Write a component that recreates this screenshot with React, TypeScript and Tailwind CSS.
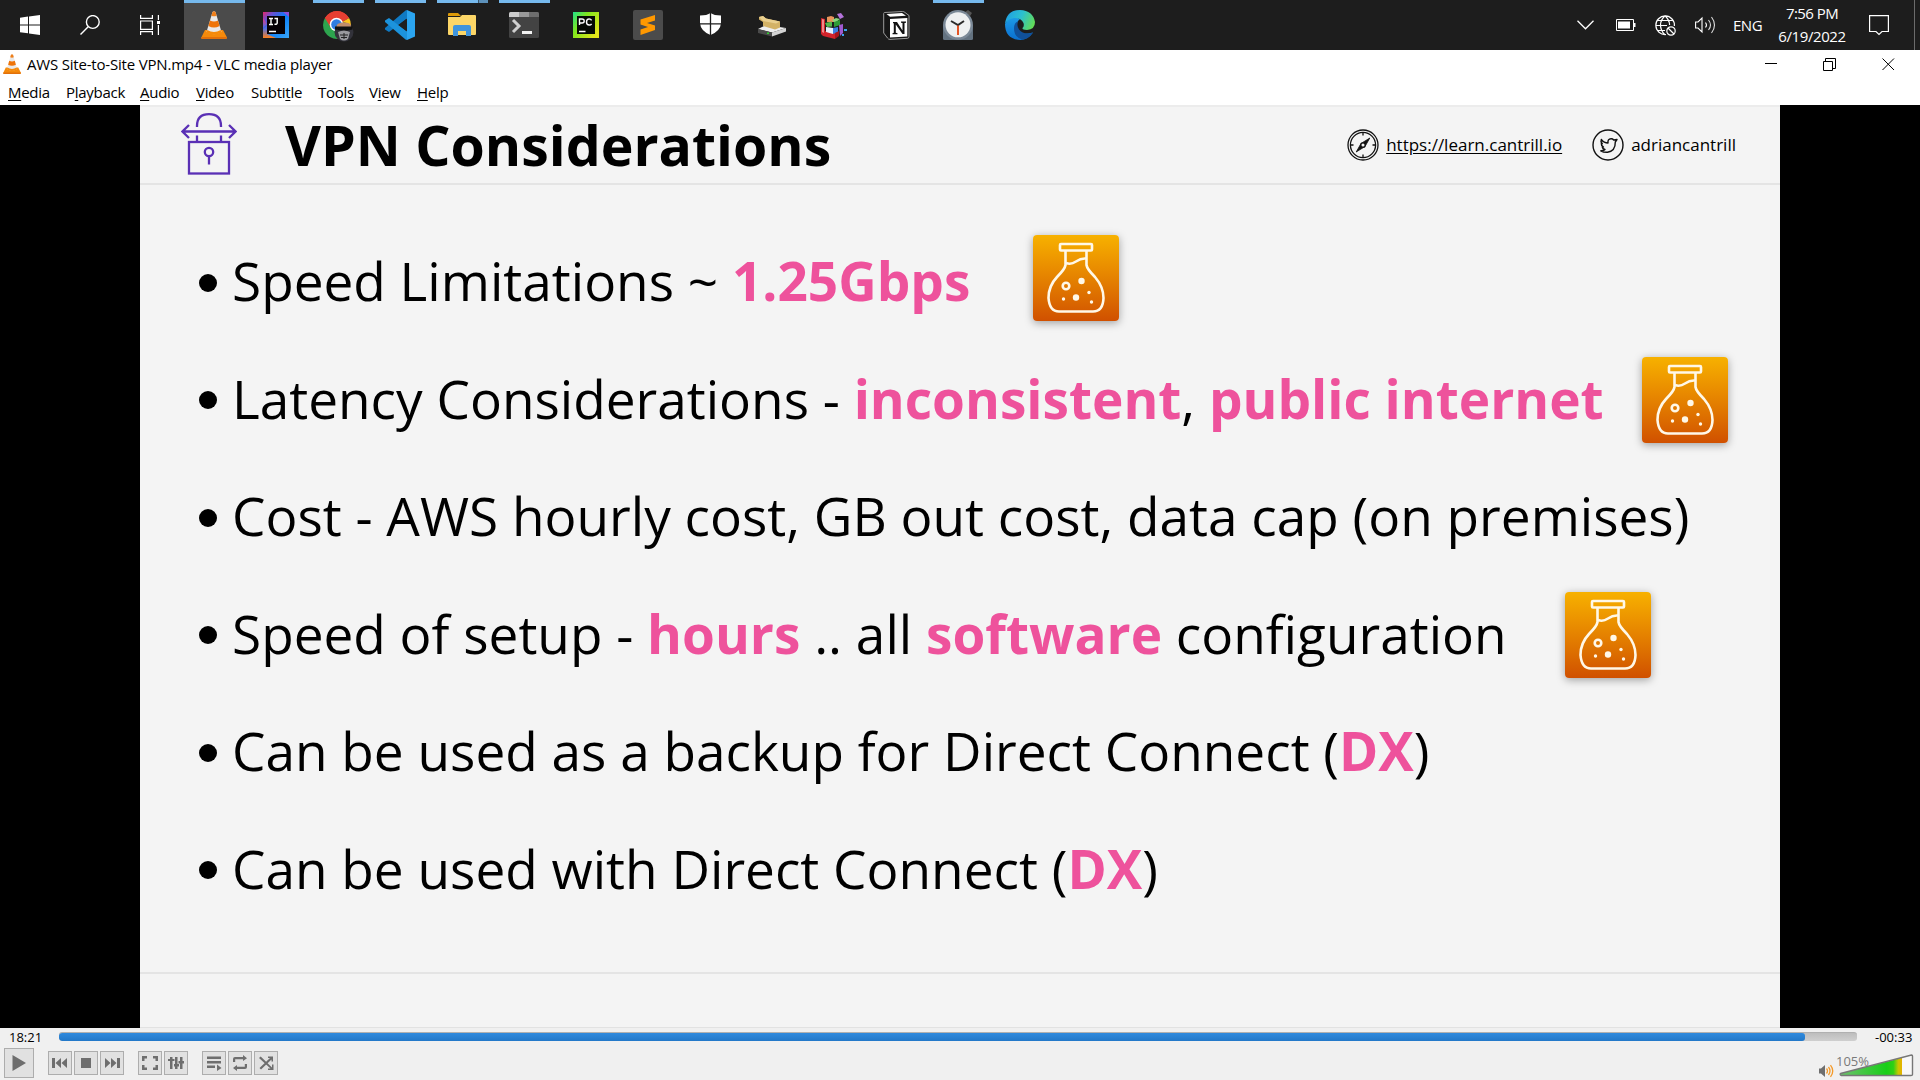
import { type ReactNode } from "react";

const SEGOE = "font-['Open_Sans','Noto_Sans',sans-serif]";

function VlcCone({ className }: { className: string }) {
  return (
    <svg viewBox="0 0 26 28" className={className} preserveAspectRatio="none">
      <path d="M4 19 L22 19 L26 26.5 Q26 28 24.5 28 L1.500 28 Q0 28 .3 26.500Z" fill="#f58a0b" />
      <path d="M.3 26 L25.800 26 Q26 28 24.500 28 L1.500 28 Q0 28 .3 26Z" fill="#e2700a" />
      <path d="M11.500 1 Q13 -.5 14.500 1 L20.500 21 Q13 25.500 5.500 21Z" fill="#e9e9e9" />
      <path d="M11.500 1 Q13 -.5 14.500 1 L15.600 4.700 Q13 6 10.400 4.700Z" fill="#ef7f1a" />
      <path d="M9 9.500 Q13 11.500 17 9.500 L18.600 15 Q13 18 7.400 15Z" fill="#ef7408" />
      <path d="M6.300 19 Q13 23 19.700 19 L20.500 21.500 Q13 26 5.500 21.500Z" fill="#f58a0b" />
    </svg>
  );
}

const WindowsIcon = () => (
  <svg width="20" height="20" viewBox="0 0 20 20" fill="#fff">
    <path d="M0 2.800 8 1.600V9.500H0zM9 1.400 20 0V9.500H9zM0 10.500H8V18.300L0 17.200zM9 10.500H20V20L9 18.500z" />
  </svg>
);

const SearchIcon = () => (
  <svg width="20" height="20" viewBox="0 0 20 20" fill="none" stroke="#fff" strokeWidth="1.4">
    <circle cx="12.800" cy="7" r="6.400" />
    <path d="M8.200 11.700 0.500 19.500" />
  </svg>
);

const TaskViewIcon = () => (
  <svg width="20" height="20" viewBox="0 0 20 20" fill="none" stroke="#fff" strokeWidth="1.200">
    <path d="M.6 0V3.400H12.400V0M.6 20V16.600H12.400V20M.6 6V14.400H12.400V6zM18.400 0V5M18.400 10V20" />
    <rect x="17" y="6" width="3" height="3" fill="#fff" stroke="none" />
  </svg>
);

const IntellijIcon = () => (
  <svg width="26" height="26" viewBox="0 0 26 26">
    <defs>
      <linearGradient id="ij" x1="0" y1="0" x2="1" y2="1">
        <stop offset="0" stopColor="#e8256b" />
        <stop offset=".2" stopColor="#6a4fd0" />
        <stop offset=".5" stopColor="#087cfa" />
        <stop offset="1" stopColor="#3aa5f5" />
      </linearGradient>
      <linearGradient id="ij2" x1="0" y1="0" x2="0" y2="1">
        <stop offset="0" stopColor="#f0357b" />
        <stop offset=".5" stopColor="#4b6fe8" />
        <stop offset="1" stopColor="#fc801d" />
      </linearGradient>
    </defs>
    <rect width="26" height="26" fill="url(#ij)" />
    <path d="M0 6 4 12 0 16zM0 17 4 14V22L13 26H0z" fill="url(#ij2)" />
    <path d="M20 0H26V5z" fill="#8a4fd8" />
    <rect x="4" y="4" width="18" height="18" fill="#050005" />
    <path d="M6 6.500H10M6 12.500H10M8 6.500V12.500M11.500 6.500H15M14.200 6.500V11Q14.200 12.600 11.500 12.200M6 19.500H13" fill="none" stroke="#fff" strokeWidth="1.400" />
  </svg>
);

const ChromeIcon = () => (
  <svg width="31" height="31" viewBox="0 0 31 31">
    <path d="M14 14 L1.900 7 A14 14 0 0 1 26.100 7z" fill="#e53f32" />
    <path d="M14 14 V28 A14 14 0 0 1 1.900 7z" fill="#2da44e" />
    <path d="M14 14 L26.100 7 A14 14 0 0 1 14 28z" fill="#fcc31e" />
    <path d="M14 7H26.100A14 14 0 0 0 1.900 7L8 17z" fill="#e53f32" />
    <circle cx="13.500" cy="13.500" r="6.800" fill="#fff" />
    <circle cx="13.500" cy="13.500" r="5.300" fill="#2f7de1" />
    <circle cx="21" cy="21" r="9.500" fill="#32323a" />
    <path d="M13.500 15Q14 11.500 21 11.500T28 15L27 19H14.500z" fill="#c08d6c" />
    <path d="M12 15.500H29.500V18.500L22 20 12 18.500z" fill="#111" />
    <path d="M15 21Q21 18 27 21L25 28Q21 31 17 28z" fill="#9a9a9e" />
    <path d="M17 24H25M18 26.500H24M21 22V28" stroke="#222" strokeWidth="1" />
  </svg>
);

const VsCodeIcon = () => (
  <svg width="30" height="30" viewBox="0 0 30 30">
    <path d="M22 0 30 3.500V26.500L22 30 21 22V8z" fill="#2ba5f0" />
    <path d="M22 0V8.500L4 22 0 19.500V18L20.500 .6z" fill="#0f7ac4" />
    <path d="M22 30V21.500L4 8 0 10.500V12L20.500 29.400z" fill="#1c93dc" />
    <path d="M22 8.500V21.500L13.500 15z" fill="#1e1e1e" />
  </svg>
);

const ExplorerIcon = () => (
  <svg width="28" height="24" viewBox="0 0 28 24">
    <path d="M0 1Q0 0 1 0H10L13 3H0z" fill="#dd9a07" />
    <path d="M0 4H12L14 2H27Q28 2 28 3V21Q28 22 27 22H1Q0 22 0 21z" fill="#fcd667" />
    <path d="M5 23V14Q5 12 7 12H21Q23 12 23 14V23H18V18H10V23z" fill="#3f94dc" />
  </svg>
);

const TerminalIcon = () => (
  <svg width="30" height="26" viewBox="0 0 30 26">
    <rect width="30" height="26" rx="1.500" fill="#434343" />
    <path d="M0 5V1.500Q0 0 1.500 0H10V5z" fill="#ccc" />
    <path d="M10 0H20V5H10z" fill="#999" />
    <path d="M20 0H28.500Q30 0 30 1.500V5H20z" fill="#6e6e6e" />
    <path d="M4 8 10 14 4 20" fill="none" stroke="#cfcfcf" strokeWidth="3" />
    <rect x="13" y="19" width="10" height="3" fill="#f2f2f2" />
  </svg>
);

const PycharmIcon = () => (
  <svg width="26" height="26" viewBox="0 0 26 26">
    <defs>
      <linearGradient id="pc" x1="0" y1="0" x2="1" y2=".7">
        <stop offset="0" stopColor="#21e08a" />
        <stop offset=".4" stopColor="#7fe61e" />
        <stop offset="1" stopColor="#e4e61a" />
      </linearGradient>
    </defs>
    <rect width="26" height="26" fill="url(#pc)" />
    <rect x="4" y="4" width="18" height="18" fill="#060b04" />
    <path d="M6.500 13V7H9Q11.200 7 11.200 9 11.200 11 9 11H6.500M18.600 8.300Q17.800 6.900 16.200 6.900 13.500 7 13.500 10 13.500 13 16.200 13 17.800 13 18.600 11.800M6 19.500H12.500" fill="none" stroke="#fff" strokeWidth="1.400" />
  </svg>
);

const SublimeIcon = () => (
  <svg width="30" height="30" viewBox="0 0 30 30">
    <rect width="30" height="30" rx="2" fill="#4b4b4b" />
    <path d="M22 5V10.500L14 13 22 15.500V20L7.500 25V19.500L15 17 7.500 14.500V9.500z" fill="#ff9800" />
  </svg>
);

const ShieldIcon = () => (
  <svg width="21" height="22" viewBox="0 0 21 22">
    <path d="M10.500 0Q14 2.500 21 2.500V10Q20.500 18 10.500 22 .5 18 0 10V2.500Q7 2.500 10.500 0z" fill="#fff" />
    <path d="M10.500 0V22M0 10.800H21" stroke="#1d1d1d" strokeWidth="1.300" />
  </svg>
);

const DriveIcon = () => (
  <svg width="28" height="21" viewBox="0 0 28 21">
    <path d="M0 13 8 9 28 12 14 16.500z" fill="#eee" />
    <path d="M0 13 14 16.500V20.500L0 17z" fill="#4a4a4a" />
    <path d="M14 16.500 28 12V15.500L14 20.500z" fill="#d4d4d4" />
    <path d="M1 1 5 0 8 2.500 22 5.500V11.500L17 13.500 5 10V6L1 3.500z" fill="#d3b266" />
    <path d="M1 1 5 0 8 2.500 22 5.500 18 7.500 5 5z" fill="#e9cf8f" />
    <rect x="9" y="16.500" width="2" height="1.500" fill="#2fd02f" />
  </svg>
);

const DefragIcon = () => (
  <svg width="27" height="26" viewBox="0 0 27 26">
    <path d="M0 5 4 6V18L14 20V26L2 23 0 21z" fill="#d2232b" />
    <path d="M1 6 3 6.500V20L1 19z" fill="#f08a8a" />
    <path d="M6 4 10 3 13 4V9L6 9z" fill="#e9955a" />
    <path d="M4 10 11 8.500V13.500L6 14z" fill="#54b64a" />
    <path d="M11 7 15 5 19 6 14 10z" fill="#8ad67d" />
    <path d="M13 9 19 7V12L13 14z" fill="#2f9c37" />
    <path d="M5 14 12 15V21L5 19z" fill="#e8f0fb" />
    <path d="M12 15 17 14V19L12 21z" fill="#3b7fe0" />
    <path d="M14 20 18 18V23L14 26z" fill="#a8141c" />
    <path d="M18 12 22 11V20L19 23z" fill="#a05ad2" />
    <path d="M16 1 20 0 23 4 19 6z" fill="#b574dc" />
    <path d="M23 16H26V18H23zM21 21H23V23H21z" fill="#3aa3ef" />
  </svg>
);

const NotionIcon = () => (
  <svg width="27" height="29" viewBox="0 0 27 29">
    <path d="M1.500 1.500 19.500 .5Q21 .5 22 1.500L26 4.500V25.500Q26 27.200 24.500 27.300L7 28.400Q5.500 28.500 4.500 27L.7 22V2.500Q.7 1.600 1.500 1.500z" fill="#161616" stroke="#a9a9a9" strokeWidth=".9" />
    <path d="M3.500 3 19 2 23 4.800 7 5.800z" fill="#fff" />
    <path d="M7 8 24.300 7V25.500L7 26.500z" fill="#fff" />
    <path d="M10 11H14L19.500 19.500V12L18 11.700V10.500H23V11.700L21.500 12V23H19.500L12.800 13.500V21.800L14.500 22.200V23.200H9.500V22.200L10.800 21.800V12.500L10 12z" fill="#111" />
  </svg>
);

const ClockIcon = () => (
  <svg width="30" height="30" viewBox="0 0 30 30">
    <path d="M0 15H30V28.500Q30 30 28.500 30H1.500Q0 30 0 28.500z" fill="#637280" />
    <path d="M22 2 25 0 29 3 27 6z" fill="#555" />
    <circle cx="15" cy="15" r="15" fill="#7b8997" />
    <circle cx="15" cy="14.800" r="12.500" fill="#eef0f1" />
    <path d="M8 11 15 15 21 11" fill="none" stroke="#2b2b2b" strokeWidth="2" />
    <path d="M15 15.500V25" stroke="#e2420e" strokeWidth="1.800" />
  </svg>
);

const EdgeIcon = () => (
  <svg width="30" height="30" viewBox="0 0 30 30">
    <defs>
      <linearGradient id="edgeTop" x1="0" y1=".3" x2="1" y2=".6">
        <stop offset="0" stopColor="#1f9fe4" />
        <stop offset=".5" stopColor="#2cc0cf" />
        <stop offset="1" stopColor="#63dc55" />
      </linearGradient>
      <linearGradient id="edgeBody" x1="0" y1="0" x2="0" y2="1">
        <stop offset="0" stopColor="#1d9be6" />
        <stop offset="1" stopColor="#0a6fd0" />
      </linearGradient>
    </defs>
    <path d="M0 14Q6 4 15 9 10 13 12 20 15 26 28 22.500 23 30 15 30 0 29 0 14z" fill="url(#edgeBody)" />
    <path d="M9 18.500Q9 12.500 13 11.500 11.500 16 14 19.500 19 25.500 28 22.500 24 29 17 29.500 9 27 9 18.500z" fill="#10509a" />
    <path d="M0 14Q1.500 0 15 0 28 .5 30 12 30 19.500 22 20 17 20 17.500 18 19.500 16 18.500 13 16 7.500 9 8 3 9 0 14z" fill="url(#edgeTop)" />
  </svg>
);

type TaskbarApp = { icon: ReactNode; state?: "active" | "open" | "multi"; drop?: string };

const APPS: TaskbarApp[] = [
  { icon: <VlcCone className="h-7 w-[26px]" />, state: "active" },
  { icon: <IntellijIcon /> },
  { icon: <ChromeIcon />, state: "open", drop: "pt-[3px]" },
  { icon: <VsCodeIcon />, state: "open" },
  { icon: <ExplorerIcon />, state: "multi" },
  { icon: <TerminalIcon />, state: "open" },
  { icon: <PycharmIcon /> },
  { icon: <SublimeIcon /> },
  { icon: <ShieldIcon />, drop: "pb-0.5" },
  { icon: <DriveIcon />, drop: "pt-0.5" },
  { icon: <DefragIcon />, drop: "pt-0.5" },
  { icon: <NotionIcon /> },
  { icon: <ClockIcon />, state: "open" },
  { icon: <EdgeIcon /> },
];

function Taskbar() {
  return (
    <header className="flex h-[50px] shrink-0 bg-[#1d1d1d] text-white">
      <div className="flex w-[184px] items-center gap-10 pl-5">
        <WindowsIcon />
        <SearchIcon />
        <TaskViewIcon />
      </div>
      {APPS.map(({ icon, state, drop }, i) => (
        <div key={i} className={"relative flex w-[62px] items-center justify-center " + (drop ?? "")}>
          {state === "active" && <div className="absolute top-0 left-0 h-full w-[61px] border-t-[3px] border-[#76b9ed] bg-[#4b4b4b]" />}
          {state === "open" && <div className="absolute top-0 left-[5px] h-[3px] w-[51px] bg-[#76b9ed]" />}
          {state === "multi" && (
            <div className="absolute top-0 left-[5px] flex h-[3px] w-[51px]">
              <div className="w-[41px] bg-[#76b9ed]" />
              <div className="w-px bg-[#3a5468]" />
              <div className="flex-1 bg-[#5d91ba]" />
            </div>
          )}
          <div className="relative -left-px">{icon}</div>
        </div>
      ))}
      <div className="flex-1" />
      <div className={"flex w-[337px] items-center " + SEGOE}>
        <svg width="17" height="10" viewBox="0 0 17 10" fill="none" stroke="#fff" strokeWidth="1.300">
          <path d="M.5 .8 8.500 8.800 16.500 .8" />
        </svg>
        <svg width="20" height="12" viewBox="0 0 20 12" className="ml-[22px]">
          <path d="M.5 .5H17.500V11.500H.5z" fill="none" stroke="#fff" />
          <path d="M2 2.500H14V9.500H2zM18 4H19.500V8H18z" fill="#fff" />
        </svg>
        <svg width="21" height="21" viewBox="0 0 21 21" fill="none" stroke="#fff" strokeWidth="1.200" className="ml-[19px]">
          <path d="M11 19.500A9.300 9.300 0 1 1 19.400 11M10 .8Q5.500 5 5.500 10T9.500 19.500M10 .8Q14.500 5 14.600 10M2 5.500H18.500M.8 10.500H12M2 15.500H10" />
          <circle cx="16" cy="16" r="4.200" />
          <path d="M13 13 19 19" />
        </svg>
        <svg width="21" height="18" viewBox="0 0 21 18" fill="none" stroke="#fff" strokeWidth="1.100" className="ml-[19px]">
          <path d="M.6 6V12H3L7 16V2L3 6zM10.500 6.500Q12.500 9 10.500 11.500" />
          <path d="M13.500 4Q17.500 9 13.500 14M16.500 1Q22.500 9 16.500 17" opacity=".85" />
        </svg>
        <span className="ml-[17px] w-[30px] text-[15px] tracking-[-0.5px]">ENG</span>
        <div className="ml-[14px] flex w-[70px] flex-col items-center text-[15px] leading-[23px] whitespace-nowrap">
          <span className="tracking-[-0.55px]">7:56 PM</span>
          <span className="tracking-[-0.4px]">6/19/2022</span>
        </div>
        <svg width="20" height="21" viewBox="0 0 20 21" fill="none" stroke="#fff" strokeWidth="1.200" className="ml-[22px]">
          <path d="M.6 .6H19.400V16.500H13L10 19.500 7 16.500H.6z" />
        </svg>
      </div>
      <div className="w-[6px] border-l border-[#6b6b6b]" />
    </header>
  );
}

const MENU: [string, string, string, string][] = [
  ["", "M", "edia", "w-[58px]"],
  ["P", "l", "ayback", "w-[74px]"],
  ["", "A", "udio", "w-[56px]"],
  ["", "V", "ideo", "w-[55px]"],
  ["Subti", "t", "le", "w-[67px]"],
  ["Tool", "s", "", "w-[51px]"],
  ["V", "i", "ew", "w-[48px]"],
  ["", "H", "elp", "w-[50px]"],
];

function WindowChrome() {
  return (
    <div className={"flex h-[55px] shrink-0 flex-col bg-white text-black " + SEGOE}>
      <div className="flex h-[29px] items-center">
        <VlcCone className="mb-px ml-[3px] h-5 w-[18px]" />
        <span className="mb-px ml-[6px] text-[15px] leading-none tracking-[-0.19px] whitespace-nowrap">
          AWS Site-to-Site VPN.mp4 - VLC media player
        </span>
        <div className="flex-1" />
        <svg width="130" height="14" viewBox="0 0 130 14" fill="none" stroke="#000" className="mr-[25px] mb-[2px]">
          <path d="M0 6.500H12M58.500 4.500H67.500V13.500H58.500zM60.500 4.500V1.500H70.500V11.500H67.500" />
          <path d="M117.500 1.500 129 13M129 1.500 117.500 13" />
        </svg>
      </div>
      <div className="flex h-[26px] items-start pl-2 text-[15px] leading-[27px] tracking-[-0.28px] whitespace-nowrap">
        {MENU.map(([a, b, c, w]) => (
          <div key={a + b} className={w}>
            {a}
            <span className="underline underline-offset-2">{b}</span>
            {c}
          </div>
        ))}
      </div>
    </div>
  );
}

const LockIcon = () => (
  <svg width="56" height="62" viewBox="0 0 56 62" fill="none" stroke="#5a30b5" strokeWidth="2.300">
    <path d="M16 14V13Q16 1.200 28 1.200T40 13V14M16 22.500V28M40 22.500V28" />
    <path d="M2 18.500H54M8 12 1.500 18.500 8 25M48 12 54.500 18.500 48 25" />
    <rect x="8" y="29" width="40" height="31.500" />
    <circle cx="28" cy="39" r="4.200" />
    <path d="M28 43V51.500" />
  </svg>
);

const CompassIcon = () => (
  <svg width="32" height="32" viewBox="0 0 32 32" fill="none" stroke="#111" strokeWidth="1.300">
    <circle cx="16" cy="16" r="15" />
    <circle cx="16" cy="16" r="12.600" />
    <path d="M16 4V6.500M16 25.500V28M4 16H6.500M25.500 16H28" />
    <path d="M22.800 9 18 17.500 9.200 23 14 14.500z" fill="#111" strokeWidth=".8" />
    <circle cx="16" cy="16" r="2.200" fill="#f4f4f4" />
  </svg>
);

const BirdIcon = () => (
  <svg width="32" height="32" viewBox="0 0 32 32" fill="none" stroke="#111" strokeWidth="1.400">
    <circle cx="16" cy="16" r="15" />
    <path d="M9.300 10.500Q12 14 16 14 15.500 10 19 9.800 20.700 9.700 21.700 11L25 10.500 23.300 13Q23.500 22 15.500 23.300 11.500 23.500 8.800 21.800 11.500 22 13 20.500 10.500 20 10.300 18.200L11.500 18Q9 16.500 9.300 14.500L10.300 14.700Q8.300 12.500 9.300 10.500z" strokeLinejoin="round" />
  </svg>
);

function Flask({ className }: { className?: string }) {
  return (
    <div className={"flex size-[86px] shrink-0 rounded-[4px] bg-linear-to-b from-[#f7b100] to-[#d05000] shadow-[0_2px_8px_rgba(0,0,0,0.35)] " + (className ?? "")}>
      <svg viewBox="0 0 86 86" fill="none" stroke="#fff8e8" strokeWidth="2.600">
        <rect x="27" y="9" width="32" height="6.500" rx="1" />
        <path d="M32.500 16V30Q32 34 24 42 15.500 51 15.500 63 16.500 76.500 26 76.500H60Q70 76.500 70.500 63 70.500 52 62 42 54 34 53.500 30V16" />
        <path d="M33 28Q38 30 43 26.500T53 23.500" />
        <circle cx="33" cy="51" r="3.300" />
        <g fill="#fff8e8" stroke="none">
          <circle cx="48.500" cy="46" r="3.200" />
          <circle cx="43" cy="62.500" r="3.200" />
          <circle cx="30.500" cy="64" r="1.700" />
          <circle cx="56" cy="57.500" r="1.700" />
          <circle cx="58.500" cy="67" r="1.700" />
        </g>
      </svg>
    </div>
  );
}

function Bullet({ width, after, children }: { width?: string; after?: ReactNode; children: ReactNode }) {
  return (
    <li className="flex h-[117.5px] items-center">
      <span className="mr-[15px] size-[18px] shrink-0 rounded-full bg-black" />
      <span className={"mb-1 whitespace-pre " + (width ?? "")}>{children}</span>
      {after}
    </li>
  );
}

const Pink = ({ children }: { children: ReactNode }) => <b className="font-bold text-[#ee529c]">{children}</b>;

function Slide() {
  return (
    <main className="flex h-[923px] shrink-0 justify-center bg-black">
      <section className="flex w-[1640px] flex-col bg-[#f4f4f4] font-['Open_Sans','Noto_Sans',sans-serif] text-black">
        <div className="flex h-[80px] shrink-0 items-center border-t-2 border-b-2 border-t-[#ececec] border-b-[#e4e4e4]">
          <div className="mb-[3px] ml-[41px]"><LockIcon /></div>
          <h1 className="ml-12 text-[55.4px] leading-none font-bold whitespace-nowrap">VPN Considerations</h1>
          <div className="flex-1" />
          <CompassIcon />
          <span className="mr-[30px] ml-[7px] text-[17px] underline underline-offset-2">https://learn.cantrill.io</span>
          <BirdIcon />
          <span className="mr-11 ml-[7px] text-[17px]">adriancantrill</span>
        </div>
        <ul className="flex h-[787px] shrink-0 flex-col pt-[39px] pl-[59px] text-[53.14px] leading-none">
          <Bullet width="w-[801px]" after={<Flask className="-mt-2.5" />}>
            Speed Limitations ~ <Pink>1.25Gbps</Pink>
          </Bullet>
          <Bullet width="w-[1410px]" after={<Flask />}>
            Latency Considerations - <Pink>inconsistent</Pink>, <Pink>public internet</Pink>
          </Bullet>
          <Bullet>Cost - AWS hourly cost, GB out cost, data cap (on premises)</Bullet>
          <Bullet width="w-[1333px]" after={<Flask />}>
            Speed of setup - <Pink>hours</Pink> .. all <Pink>software</Pink> configuration
          </Bullet>
          <Bullet>
            Can be used as a backup for Direct Connect (<Pink>DX</Pink>)
          </Bullet>
          <Bullet>
            Can be used with Direct Connect (<Pink>DX</Pink>)
          </Bullet>
        </ul>
        <div className="h-[2px] bg-[#e4e4e4]" />
        <div className="flex-1 border-b border-[#e2e2e2]" />
      </section>
    </main>
  );
}

function Btn({ children, className }: { children: ReactNode; className?: string }) {
  return (
    <div className={"flex size-6 items-center justify-center border border-[#adadad] bg-[#e1e1e1] " + (className ?? "")}>
      <svg width="16" height="16" viewBox="0 0 16 16" fill="#6e6e6e" stroke="none">{children}</svg>
    </div>
  );
}

function Controls() {
  return (
    <footer className={"flex h-[52px] shrink-0 flex-col bg-[#f0f0f0] text-black " + SEGOE}>
      <div className="flex h-[19px] items-center text-[13px] leading-none">
        <span className="ml-[9px] w-[50px]">18:21</span>
        <div className="mt-[-2px] h-[9px] w-[1798px] overflow-hidden rounded-[3px] border-t border-[#b0b0b0] bg-linear-to-b from-[#bdbdbd] to-[#cfcfcf]">
          <div className="h-full w-[1746px] rounded-[3px] bg-linear-to-b from-[#2f8ade] to-[#2378c8]" />
        </div>
        <span className="ml-[18px]">-00:33</span>
      </div>
      <div className="flex h-[33px]">
        <div className="mt-px ml-1 flex size-[30px] items-center justify-center border border-[#adadad] bg-[#e1e1e1]">
          <svg width="16" height="18" viewBox="0 0 16 18" fill="#6e6e6e"><path d="M1.500 1 15 9 1.500 17z" /></svg>
        </div>
        <div className="mt-1 ml-[14px] flex gap-[2px]">
          <Btn><path d="M0 3H3V13H0zM9 3V13L3.500 8zM15 3V13L9.500 8z" /></Btn>
          <Btn><path d="M3 3H13V13H3z" /></Btn>
          <Btn><path d="M16 3H13V13H16zM7 3V13L12.500 8zM1 3V13L6.500 8z" /></Btn>
          <Btn className="ml-3"><path d="M0 1H5V3.500H2.500V6H0zM16 1H11V3.500H13.500V6H16zM0 15H5V12.500H2.500V10H0zM16 15H11V12.500H13.500V10H16z" /></Btn>
          <Btn><path d="M2 2H4.500V14H2zM0 4H6.500V6H0zM7 2H9.500V14H7zM6 9H11V11.500H6zM12 2H14.500V14H12zM10.500 6H16V8.500H10.500z" /></Btn>
          <Btn className="ml-3"><path d="M1 1.500H15V4H1zM1 6H15V8.500H1zM1 10.500H9V13H1zM11 9.500 15.500 13 11 16z" /></Btn>
          <Btn><path d="M1 7V4Q1 2 3 2H11V0L15 3.200 11 6V4.200H3.200V7zM15 9V12Q15 14 13 14H5V16L1 13 5 10V11.800H12.800V9z" /></Btn>
          <Btn><path d="M1 3 2.700 1.500 14 12.500V9.500H15.500V15H10V13.500H12.500zM10 1.500H15V6.500H13.500V4.500L3 14.500 1.500 13 12 3H10z" /></Btn>
        </div>
        <div className="flex-1" />
        <svg width="15" height="14" viewBox="0 0 15 14" className="mt-[17px]">
          <path d="M0 4.500H2L6 1V13L2 9.500H0z" fill="#6e6e6e" />
          <path d="M7.500 4.500Q9.500 7 7.500 9.500M9.500 3Q12.500 7 9.500 11M11.500 1.200Q16 7 11.500 12.800" fill="none" stroke="#f59a28" strokeWidth="1.300" />
        </svg>
        <div className="relative mt-[7px] mr-[6px] ml-[5px] h-[24px] w-[75px]">
          <svg width="75" height="24" viewBox="0 0 75 24">
            <defs>
              <linearGradient id="vol" x1="0" x2="1">
                <stop offset="0" stopColor="#6fbf6f" />
                <stop offset=".75" stopColor="#18cf18" />
                <stop offset=".86" stopColor="#2fd015" />
                <stop offset=".94" stopColor="#c8c800" />
                <stop offset="1" stopColor="#e8b000" />
              </linearGradient>
            </defs>
            <path d="M1.500 19.500 73.500 1V20.500Q73.500 21.500 72 21.500H2.500Q.5 21 1.500 19.500z" fill="#f8f8f8" />
            <path d="M1.500 19.500 63 3.700V21.500H2.500Q.5 21 1.500 19.500z" fill="url(#vol)" />
            <path d="M1.500 19.500 72.500 1Q73.500 1 73.500 2V20.500Q73.500 21.500 72 21.500H2.500Q.5 21 1.500 19.500z" fill="none" stroke="#777" strokeWidth="1.400" />
          </svg>
          <span className="absolute top-px -left-[3px] text-[13px] leading-none text-[#7a7a7a]">105%</span>
        </div>
      </div>
    </footer>
  );
}

export default function App() {
  return (
    <div className="flex h-[1080px] w-[1920px] flex-col overflow-hidden">
      <Taskbar />
      <WindowChrome />
      <Slide />
      <Controls />
    </div>
  );
}
